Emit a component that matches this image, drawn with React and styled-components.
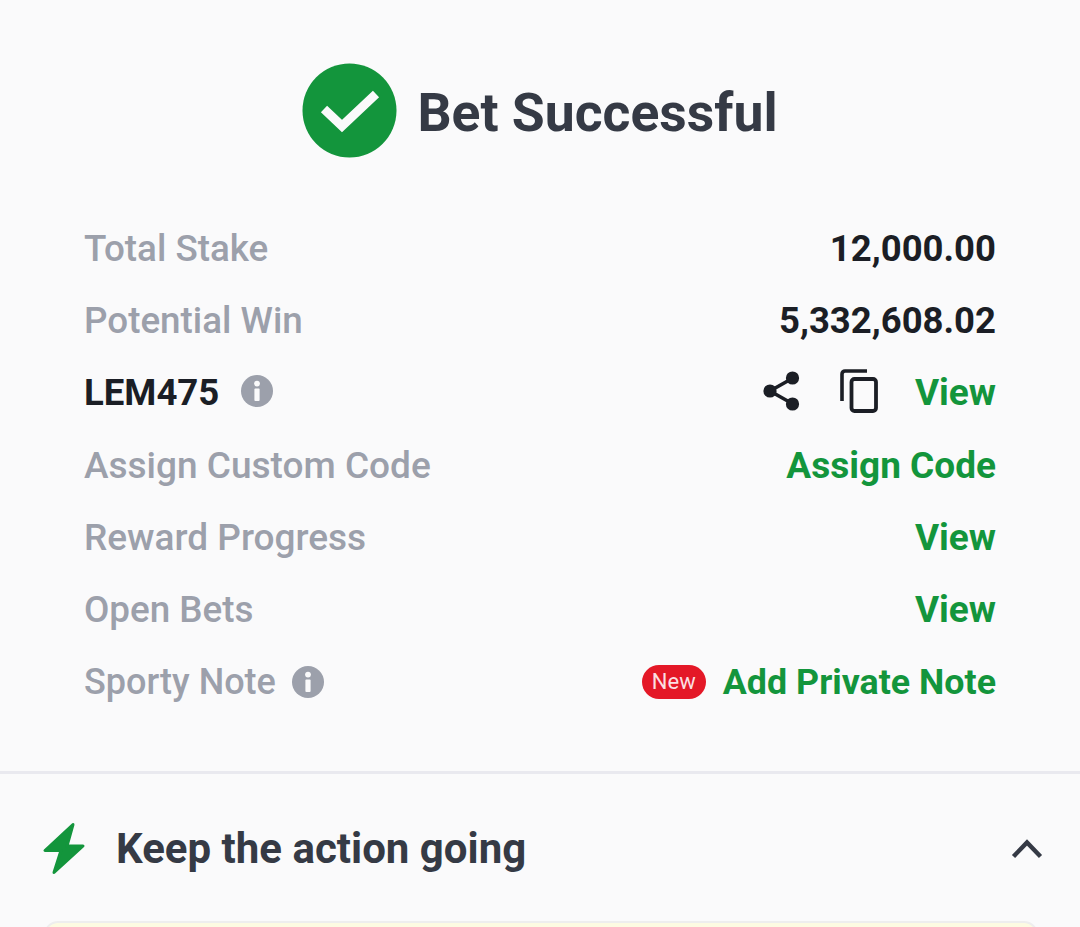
import React from "react";
import styled, { createGlobalStyle } from "styled-components";

const Global = createGlobalStyle`
  html, body { margin: 0; padding: 0; background: #fafafb; }
  body { font-family: Roboto, "Liberation Sans", sans-serif; }
`;

const Page = styled.div`
  width: 1080px;
  height: 927px;
  overflow: hidden;
  background: #fafafb;
  display: flex;
  flex-direction: column;
`;

const Header = styled.header`
  flex: none;
  display: flex;
  align-items: center;
  justify-content: center;
  gap: 20px;
  padding: 63px 0 0 0;
  height: 95px;
`;

const Title = styled.h1`
  margin: 4px 0 0;
  font-size: 53.5px;
  line-height: 95px;
  font-weight: 700;
  color: #353a45;
`;

const Rows = styled.section`
  flex: none;
  display: flex;
  flex-direction: column;
  padding: 54px 84px 0 84px;
`;

const Row = styled.div`
  display: flex;
  align-items: center;
  justify-content: space-between;
  height: 72.3px;
`;

const Side = styled.div`
  display: flex;
  align-items: center;
`;

const Label = styled.span`
  font-size: ${(p) => p.$size || 36.8}px;
  font-weight: 500;
  color: #9ca0ab;
`;

const Code = styled.span`
  font-size: 36.6px;
  font-weight: 700;
  color: #1b1e25;
`;

const Value = styled.span`
  font-size: 36.5px;
  font-weight: 700;
  color: #1b1e25;
`;

const Action = styled.span`
  font-size: ${(p) => p.$size || 37}px;
  font-weight: 700;
  color: #13953c;
`;

const InfoWrap = styled.span`
  display: flex;
  margin-left: ${(p) => p.$gap}px;
  margin-bottom: ${(p) => p.$lift || 0}px;
`;

const IconSlot = styled.span`
  display: flex;
  margin-right: ${(p) => p.$gap}px;
  margin-bottom: 4px;
`;

const Badge = styled.span`
  display: flex;
  align-items: center;
  justify-content: center;
  width: 64px;
  height: 34px;
  margin-right: 17px;
  border-radius: 17px;
  background: #e41827;
  color: #fbdfe2;
  font-size: 22px;
  font-weight: 400;
`;

const Divider = styled.hr`
  flex: none;
  margin: 53px 0 0;
  border: 0;
  height: 3px;
  background: #e9e9ef;
`;

const Section = styled.div`
  flex: none;
  display: flex;
  align-items: center;
  justify-content: space-between;
  height: 149px;
  padding: 0 37px 0 42px;
`;

const SectionTitle = styled.h2`
  margin: 0;
  font-size: 42px;
  font-weight: 700;
  color: #353a45;
`;

const SectionLeft = styled.div`
  display: flex;
  align-items: center;
  gap: 30px;
`;

const Card = styled.div`
  flex: none;
  margin: -2px 42px 0 44px;
  height: 40px;
  background: #fdfbe2;
  border: 2px solid #eeeeee;
  border-radius: 14px;
`;

const Info = () => (
  <svg width="32" height="32" viewBox="0 0 32 32">
    <circle cx="16" cy="16" r="16" fill="#9ca0ab" />
    <circle cx="16" cy="8.6" r="2.9" fill="#fafafb" />
    <rect x="13.4" y="13.4" width="5.2" height="12.6" rx="1" fill="#fafafb" />
  </svg>
);

const Share = () => (
  <svg width="37" height="40" viewBox="0 0 37 40">
    <path d="M30 7 L7 20 L30 33" fill="none" stroke="#1b1e25" strokeWidth="3.6" />
    <circle cx="29.5" cy="7" r="6.6" fill="#1b1e25" />
    <circle cx="7" cy="20" r="6.6" fill="#1b1e25" />
    <circle cx="29.5" cy="33" r="6.6" fill="#1b1e25" />
  </svg>
);

const Copy = () => (
  <svg width="38" height="44" viewBox="0 0 38 44" fill="none" stroke="#1b1e25">
    <path d="M27 2 H5 a3 3 0 0 0 -3 3 V32" strokeWidth="3.6" />
    <rect x="11.5" y="10" width="24.5" height="32" rx="3" strokeWidth="3.8" />
  </svg>
);

const Check = () => (
  <svg width="95" height="95" viewBox="0 0 95 95">
    <circle cx="47.5" cy="47.5" r="47" fill="#13953c" />
    <path d="M22 46 L40 63 L74 31" fill="none" stroke="#fafafb" strokeWidth="9" />
  </svg>
);

const Bolt = () => (
  <svg width="44" height="55" viewBox="0 0 44 55">
    <path
      d="M31 3.5 L3 29.5 H19 L12 51.5 L41 25 H25 Z"
      fill="#13953c"
      stroke="#13953c"
      strokeWidth="3"
      strokeLinejoin="round"
    />
  </svg>
);

const Chevron = () => (
  <svg width="32" height="22" viewBox="0 0 32 22">
    <path d="M2.5 18.5 L16 4.5 L29.5 18.5" fill="none" stroke="#353a45" strokeWidth="4.4" />
  </svg>
);

export default function App() {
  return (
    <Page>
      <Global />
      <Header>
        <Check />
        <Title>Bet Successful</Title>
      </Header>
      <Rows>
        <Row>
          <Label>Total Stake</Label>
          <Value>12,000.00</Value>
        </Row>
        <Row>
          <Label>Potential Win</Label>
          <Value>5,332,608.02</Value>
        </Row>
        <Row>
          <Side>
            <Code>LEM475</Code>
            <InfoWrap $gap={22} $lift={4}><Info /></InfoWrap>
          </Side>
          <Side>
            <IconSlot $gap={40}><Share /></IconSlot>
            <IconSlot $gap={37}><Copy /></IconSlot>
            <Action>View</Action>
          </Side>
        </Row>
        <Row>
          <Label $size={37}>Assign Custom Code</Label>
          <Action>Assign Code</Action>
        </Row>
        <Row>
          <Label $size={37}>Reward Progress</Label>
          <Action>View</Action>
        </Row>
        <Row>
          <Label>Open Bets</Label>
          <Action>View</Action>
        </Row>
        <Row>
          <Side>
            <Label $size={36}>Sporty Note</Label>
            <InfoWrap $gap={16}><Info /></InfoWrap>
          </Side>
          <Side>
            <Badge>New</Badge>
            <Action $size={35.8}>Add Private Note</Action>
          </Side>
        </Row>
      </Rows>
      <Divider />
      <Section>
        <SectionLeft>
          <Bolt />
          <SectionTitle>Keep the action going</SectionTitle>
        </SectionLeft>
        <Chevron />
      </Section>
      <Card />
    </Page>
  );
}
